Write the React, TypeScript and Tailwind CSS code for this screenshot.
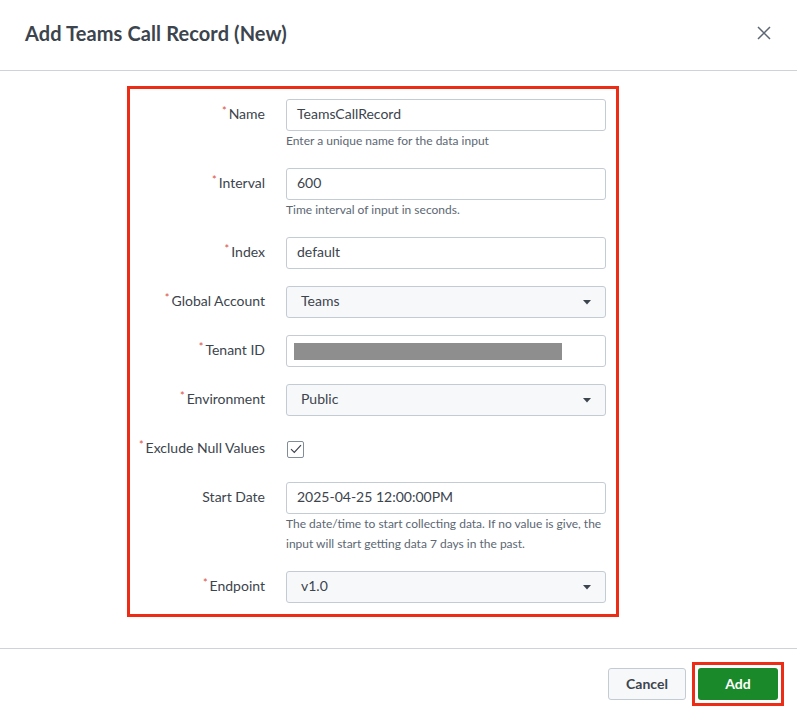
import React from "react";

type Field = {
  label: string;
  required?: boolean;
  kind: "text" | "select" | "checkbox" | "masked";
  value?: string;
  help?: string[];
};

const fields: Field[] = [
  { label: "Name", required: true, kind: "text", value: "TeamsCallRecord", help: ["Enter a unique name for the data input"] },
  { label: "Interval", required: true, kind: "text", value: "600", help: ["Time interval of input in seconds."] },
  { label: "Index", required: true, kind: "text", value: "default" },
  { label: "Global Account", required: true, kind: "select", value: "Teams" },
  { label: "Tenant ID", required: true, kind: "masked" },
  { label: "Environment", required: true, kind: "select", value: "Public" },
  { label: "Exclude Null Values", required: true, kind: "checkbox" },
  {
    label: "Start Date",
    kind: "text",
    value: "2025-04-25 12:00:00PM",
    help: [
      "The date/time to start collecting data. If no value is give, the",
      "input will start getting data 7 days in the past.",
    ],
  },
  { label: "Endpoint", required: true, kind: "select", value: "v1.0" },
];

function Control({ f }: { f: Field }) {
  if (f.kind === "checkbox") {
    return (
      <div className="h-8 flex items-center">
        <div className="w-[17px] h-[17px] ml-px border border-[#818d99] rounded-[2px] bg-white flex items-center justify-center">
          <svg width="12" height="10" viewBox="0 0 12 10" fill="none">
            <path d="M1 5.2 L4.3 8.5 L11 1.2" stroke="#3c444d" strokeWidth="1.2" />
          </svg>
        </div>
      </div>
    );
  }
  if (f.kind === "select") {
    return (
      <div className="h-8 w-[320px] rounded-[3px] border border-[#c3cbd4] bg-[#f7f8fa] flex items-center justify-between pl-[14px] pr-[14px] text-[14px] text-[#3c444d]">
        <span className="-mt-[3px]">{f.value}</span>
        <svg width="8" height="5" viewBox="0 0 8 5">
          <path d="M0 0 H8 L4 4.5 Z" fill="#3c444d" />
        </svg>
      </div>
    );
  }
  if (f.kind === "masked") {
    return (
      <div className="h-8 w-[320px] rounded-[3px] border border-[#c3cbd4] bg-white flex items-center pl-[7px]">
        <div className="h-[17px] w-[268px] bg-[#8e8e8e]" />
      </div>
    );
  }
  return (
    <div className="h-8 w-[320px] rounded-[3px] border border-[#c3cbd4] bg-white flex items-center pl-[10px] pb-[3px] text-[14px] text-[#3c444d]">
      {f.value}
    </div>
  );
}

export default function App() {
  return (
    <div className="w-[797px] h-[719px] bg-white flex flex-col font-['Lato','Liberation_Sans',sans-serif] text-[#3c444d]">
      <div className="h-[71px] shrink-0 border-b border-[#cfd3d7] flex items-center justify-between pl-[25px] pr-[26px] pb-[4px]">
        <h1 className="text-[20px] font-bold text-[#3c444d] tracking-[0.1px]">Add Teams Call Record (New)</h1>
        <svg width="14" height="14" viewBox="0 0 14 14">
          <path d="M1 1 L13 13 M13 1 L1 13" stroke="#5c6773" strokeWidth="1.5" />
        </svg>
      </div>

      <div className="flex-1">
        <div className="ml-[127px] mt-[15px] w-[492px] border-[3px] border-[#ec2c14] pt-[10px] pb-[11px] flex flex-col gap-[17px]">
          {fields.map((f) => (
            <div key={f.label} className="flex">
              <div className="w-[135px] h-8 pb-[3px] flex items-center justify-end text-[14px] text-[#3c444d]">
                {f.required && <span className="text-[#dc4e41] text-[11px] mr-[2px] -mt-[5px]">*</span>}
                <span>{f.label}</span>
              </div>
              <div className="ml-[21px] flex flex-col">
                <Control f={f} />
                {f.help && (
                  <div className="text-[12px] leading-[20px] text-[#5c6773]">
                    {f.help.map((h) => (
                      <div key={h}>{h}</div>
                    ))}
                  </div>
                )}
              </div>
            </div>
          ))}
        </div>
      </div>

      <div className="h-[71px] shrink-0 border-t border-[#cfd3d7] flex items-center justify-end pr-[13px] gap-[6px]">
        <button className="h-8 w-[78px] pb-[2px] rounded-[3px] border border-[#c3cbd4] bg-[#f7f8fa] text-[14px] font-bold text-[#3c444d]">
          Cancel
        </button>
        <div className="border-[3px] border-[#ec2c14] p-[3px]">
          <button className="h-8 w-[80px] pb-[2px] rounded-[3px] bg-[#1a8929] text-[14px] font-bold text-white">
            Add
          </button>
        </div>
      </div>
    </div>
  );
}
